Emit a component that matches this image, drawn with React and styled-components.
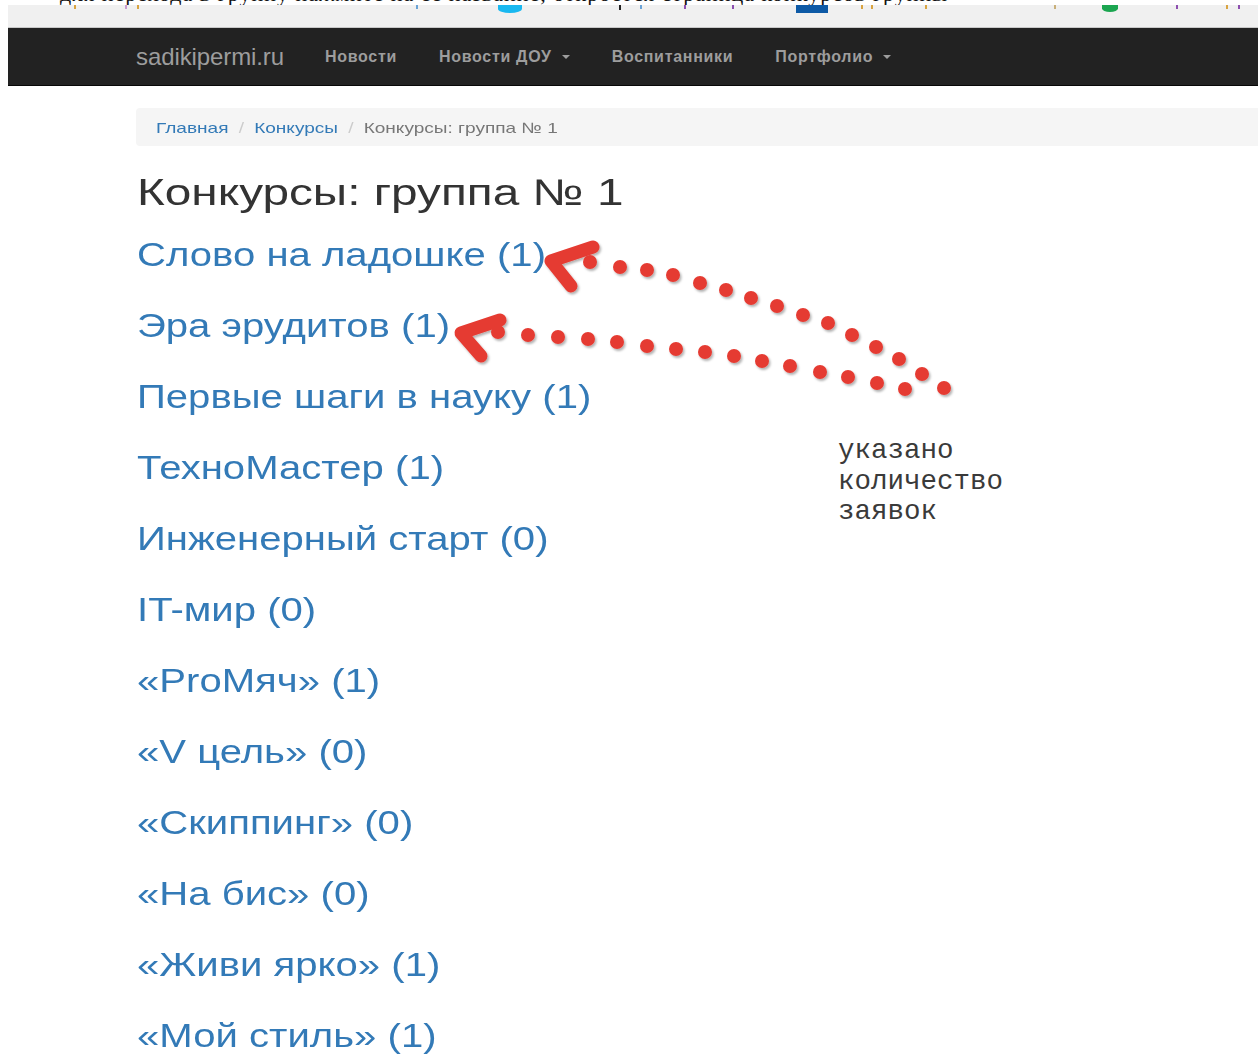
import styled, { createGlobalStyle } from "styled-components";

const GlobalStyle = createGlobalStyle`
  html, body {
    margin: 0;
    padding: 0;
    background: #fff;
  }
  body {
    font-family: "Liberation Sans", Arial, sans-serif;
    color: #333;
  }
`;

const contests = [
  { title: "Слово на ладошке", count: 1 },
  { title: "Эра эрудитов", count: 1 },
  { title: "Первые шаги в науку", count: 1 },
  { title: "ТехноМастер", count: 1 },
  { title: "Инженерный старт", count: 0 },
  { title: "IT-мир", count: 0 },
  { title: "«ProМяч»", count: 1 },
  { title: "«V цель»", count: 0 },
  { title: "«Скиппинг»", count: 0 },
  { title: "«На бис»", count: 0 },
  { title: "«Живи ярко»", count: 1 },
  { title: "«Мой стиль»", count: 1 },
];

// toolbar icon stubs peeking out under the document line: [gap, colour, width, height, round]
const ticks = [
  [66, "#d9a441"], [49, "#c79bd0"], [10, "#d9a441"], [277, "#6aa3d6"],
  [80, "#19b8f0", 24, 8, true], [97, "#222", 2, 5], [19, "#6aa3d6"],
  [42, "#8d4fb0"], [46, "#8d4fb0"], [62, "#0e5aa6", 32, 8],
  [33, "#d9a441"], [8, "#d9a441"], [52, "#d9a441"], [127, "#c9b07a"],
  [46, "#1ba550", 16, 7, true], [58, "#8d4fb0"], [48, "#d9a441"], [10, "#8d4fb0"],
];

// dots of the two hand-drawn pointers
const dotsTop = [
  [590, 262], [620, 267], [647, 270], [673, 275], [700, 283],
  [726, 290], [751, 298], [777, 306], [803, 315], [828, 323],
  [852, 335], [876, 347], [899, 359], [922, 374], [944, 388],
];
const dotsBottom = [
  [498, 332], [528, 335], [558, 337], [588, 339], [617, 342],
  [647, 346], [676, 349], [705, 352], [734, 356], [762, 361],
  [790, 366], [820, 372], [848, 377], [877, 383], [905, 389],
];

const Page = styled.div`
  position: relative;
  width: 1258px;
  height: 1055px;
  overflow: hidden;
`;

const DocLine = styled.div`
  height: 5px;
  overflow: hidden;
  padding-left: 60px;
  font-family: "Liberation Serif", "Times New Roman", serif;
  font-size: 22px;
  line-height: 22px;
  color: #111;
  white-space: nowrap;
  letter-spacing: 1px;
  span {
    display: block;
    margin-top: -17px;
  }
`;

const Ribbon = styled.div`
  margin-left: 8px;
  height: 22px;
  background: #f0f0f0;
  border-bottom: 1px solid #c8c8c8;
  display: flex;
  align-items: flex-start;
`;

const Tick = styled.i`
  display: block;
  flex: none;
  margin-left: ${(p) => p.$gap}px;
  width: ${(p) => p.$w}px;
  height: ${(p) => p.$h}px;
  background: ${(p) => p.$c};
  border-radius: ${(p) => (p.$round ? "0 0 50% 50%" : "0")};
`;

const Navbar = styled.nav`
  margin-left: 8px;
  height: 58px;
  background: #222;
  display: flex;
  align-items: center;
  padding-left: 128px;
  border-bottom: 1px solid #080808;
  box-sizing: border-box;
`;

const Brand = styled.a`
  font-size: 24px;
  color: #9d9d9d;
  margin-right: 20px;
  text-decoration: none;
  letter-spacing: -0.1px;
`;

const NavLink = styled.a`
  font-size: 16px;
  color: #9d9d9d;
  padding: 0 21px;
  letter-spacing: 0.7px;
  font-weight: 700;
  text-decoration: none;
  display: flex;
  align-items: center;
  gap: 10px;
`;

const Caret = styled.span`
  width: 0;
  height: 0;
  border-top: 4px solid #9d9d9d;
  border-left: 4px solid transparent;
  border-right: 4px solid transparent;
`;

const Container = styled.main`
  padding: 22px 0 0 136px;
`;

const Breadcrumb = styled.nav`
  height: 38px;
  padding-left: 20px;
  background: #f5f5f5;
  border-radius: 4px 0 0 4px;
  display: flex;
  align-items: center;
`;

const CrumbList = styled.ol`
  list-style: none;
  margin: 0;
  padding: 0;
  display: flex;
  font-size: 15px;
  transform: scaleX(1.27);
  transform-origin: left center;
`;

const Crumb = styled.li`
  color: ${(p) => (p.$active ? "#777" : "#337ab7")};
  &:not(:first-child)::before {
    content: "/";
    color: #ccc;
    padding: 0 8px;
  }
`;

const Title = styled.h1`
  margin: 23px 0 0 1px;
  font-size: 37px;
  font-weight: 400;
  line-height: 48px;
  color: #333;
  transform: scaleX(1.29);
  transform-origin: left center;
`;

const ContestList = styled.ul`
  list-style: none;
  margin: 2px 0 0 1px;
  padding: 0;
`;

const ContestLink = styled.li`
  font-size: 33px;
  line-height: 71px;
  color: #337ab7;
  white-space: nowrap;
  transform: scaleX(1.215);
  transform-origin: left center;
`;

const Overlay = styled.svg`
  position: absolute;
  left: 0;
  top: 0;
  pointer-events: none;
`;

const Note = styled.div`
  position: absolute;
  left: 838px;
  top: 436px;
  font-family: "Liberation Mono", "Courier New", monospace;
  font-size: 27.5px;
  line-height: 30.5px;
  color: #3a3a3a;
`;

export default function App() {
  return (
    <Page>
      <GlobalStyle />
      <DocLine>
        <span>
          для перехода в группу нажмите на её название, откроется страница конкурсов группы
        </span>
      </DocLine>
      <Ribbon>
        {ticks.map(([gap, c, w = 2, h = 4, round], i) => (
          <Tick key={i} $gap={gap} $c={c} $w={w} $h={h} $round={round} />
        ))}
      </Ribbon>
      <Navbar>
        <Brand>sadikipermi.ru</Brand>
        <NavLink>Новости</NavLink>
        <NavLink>
          Новости ДОУ <Caret />
        </NavLink>
        <NavLink>Воспитанники</NavLink>
        <NavLink>
          Портфолио <Caret />
        </NavLink>
      </Navbar>
      <Container>
        <Breadcrumb>
          <CrumbList>
            <Crumb>Главная</Crumb>
            <Crumb>Конкурсы</Crumb>
            <Crumb $active>Конкурсы: группа № 1</Crumb>
          </CrumbList>
        </Breadcrumb>
        <Title>Конкурсы: группа № 1</Title>
        <ContestList>
          {contests.map((c) => (
            <ContestLink key={c.title}>
              {c.title} ({c.count})
            </ContestLink>
          ))}
        </ContestList>
      </Container>

      <Overlay width="1258" height="1055" viewBox="0 0 1258 1055">
        <defs>
          <filter id="mark-shadow" x="-50%" y="-50%" width="200%" height="200%">
            <feDropShadow dx="1.5" dy="2" stdDeviation="1.2" floodColor="#000" floodOpacity="0.3" />
          </filter>
        </defs>
        <g fill="#e53b32" stroke="#e53b32" filter="url(#mark-shadow)">
          <path
            d="M593 247 L551 261 L571 286"
            fill="none"
            strokeWidth="13"
            strokeLinecap="round"
            strokeLinejoin="round"
          />
          <path
            d="M500 320 L461 333 L481 356"
            fill="none"
            strokeWidth="13"
            strokeLinecap="round"
            strokeLinejoin="round"
          />
          {dotsTop.concat(dotsBottom).map(([x, y], i) => (
            <circle key={i} cx={x} cy={y} r="7" stroke="none" />
          ))}
        </g>
      </Overlay>
      <Note>
        указано
        <br />
        количество
        <br />
        заявок
      </Note>
    </Page>
  );
}
